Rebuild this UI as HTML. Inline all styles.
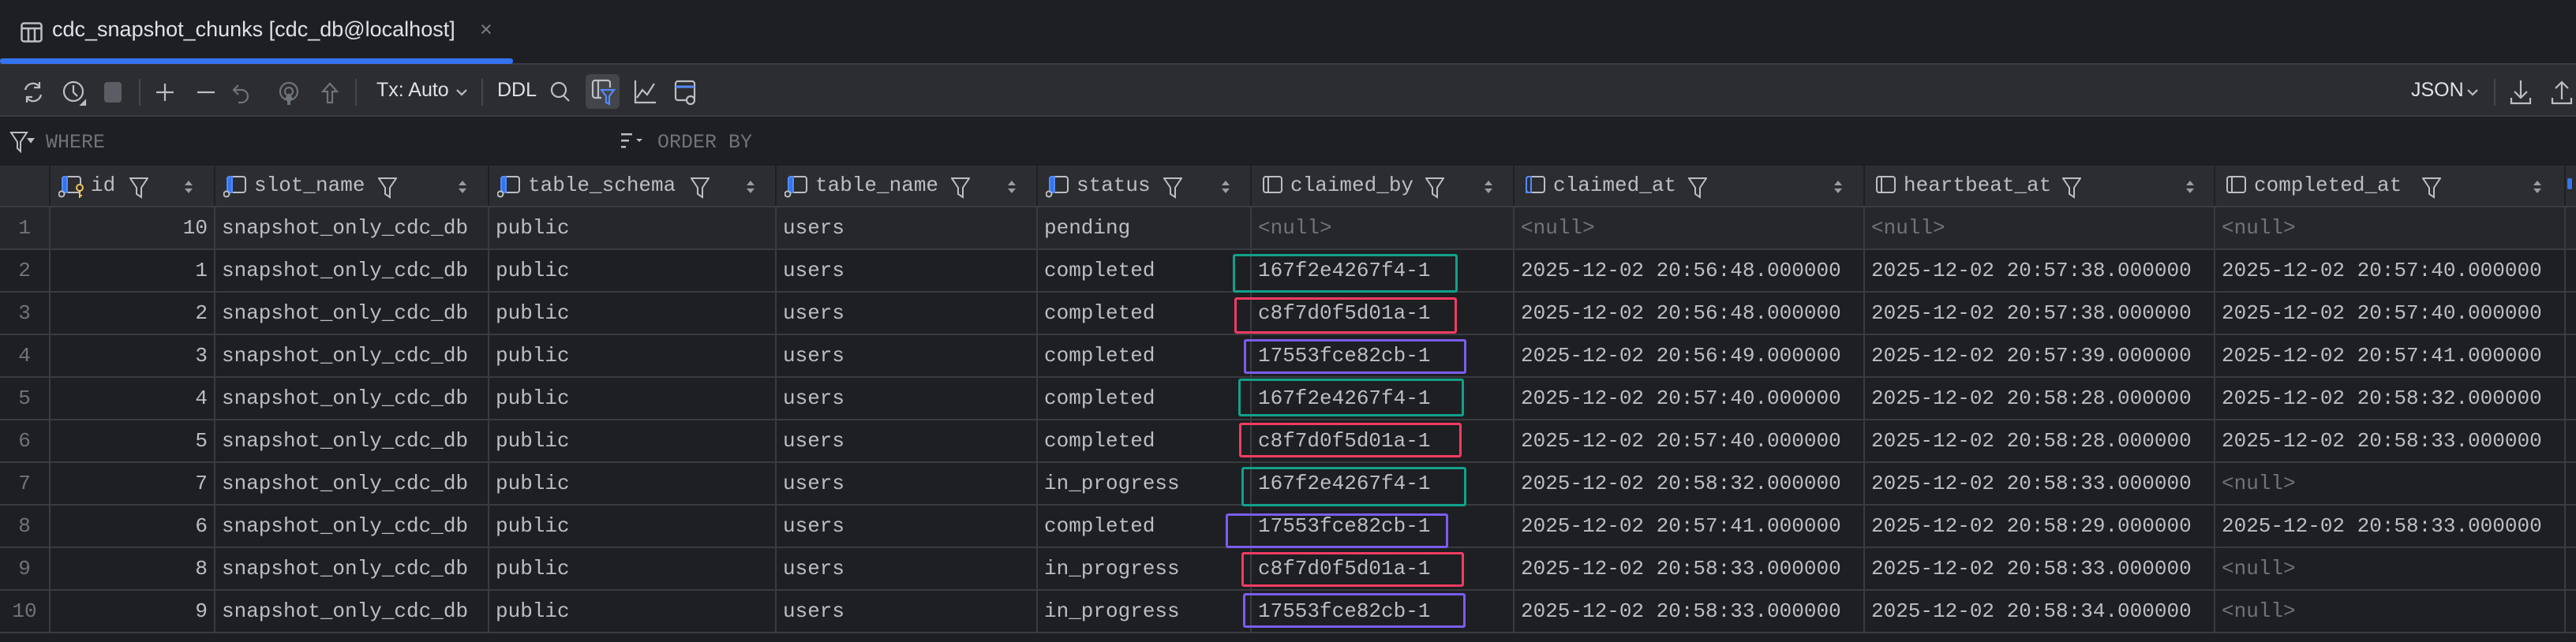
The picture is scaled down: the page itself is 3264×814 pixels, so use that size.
<!DOCTYPE html>
<html><head><meta charset="utf-8"><style>
*{margin:0;padding:0;box-sizing:border-box}
body{width:3264px;height:814px;background:#1e1f22;overflow:hidden;position:relative;font-family:"Liberation Sans",sans-serif;color:#bcbec4}
.a{position:absolute}
.mono{font-family:"Liberation Mono","DejaVu Sans Mono",monospace}
.row{position:absolute;left:0;width:3264px;height:54px;display:flex;border-bottom:2px solid #393b40}
.row>div{height:100%;border-right:2px solid #393b40;font-family:"Liberation Mono",monospace;font-size:26px;line-height:52px;padding-left:8px;white-space:nowrap;overflow:hidden;color:#bcbec4}
.row>div:nth-child(1){width:64px;color:#6f737a;text-align:center;padding-left:0}
.row>div:nth-child(2){width:209px;text-align:right;padding-right:8px}
.row>div:nth-child(3){width:347px}
.row>div:nth-child(4){width:364px}
.row>div:nth-child(5){width:331px}
.row>div:nth-child(6){width:271px}
.row>div:nth-child(7){width:333px}
.row>div:nth-child(8){width:444px}
.row>div:nth-child(9){width:444px}
.row>div:nth-child(10){width:444px}
.row>div:nth-child(11){width:13px;border-right:none}
.n{color:#6f737a!important}
.hdr{position:absolute;top:210px;left:0;width:3264px;height:53px;background:#2b2d30;display:flex;border-bottom:2px solid #393b40}
.hdr>div{height:100%;border-right:2px solid #1e1f22;position:relative;font-family:"Liberation Mono",monospace;font-size:26px;line-height:50px;color:#bcbec4;white-space:nowrap;overflow:hidden}
.hdr svg{position:absolute}
.box{position:absolute;border:3px solid;border-radius:3px}
</style></head><body>
<!-- tab -->
<svg class="a" style="left:26px;top:28px" width="28" height="26" viewBox="0 0 28 26"><rect x="1.5" y="1.5" width="25" height="23" rx="3" fill="none" stroke="#bcbec4" stroke-width="2.5"/><line x1="1.5" y1="8" x2="26.5" y2="8" stroke="#bcbec4" stroke-width="2.5"/><line x1="10" y1="8" x2="10" y2="24" stroke="#bcbec4" stroke-width="2.5"/><line x1="18" y1="8" x2="18" y2="24" stroke="#bcbec4" stroke-width="2.5"/></svg>
<div class="a" style="left:66px;top:22px;font-size:27px;color:#dfe1e5">cdc_snapshot_chunks [cdc_db@localhost]</div>
<div class="a" style="left:608px;top:22px;font-size:27px;color:#7a7e85">×</div>
<div class="a" style="left:0;top:80px;width:3264px;height:2px;background:#393b40"></div>
<div class="a" style="left:0;top:74px;width:650px;height:7px;background:#3574f0;border-radius:3px"></div>
<!-- toolbar -->
<div class="a" style="left:0;top:82px;width:3264px;height:66px;background:#2b2d30;border-bottom:2px solid #393b40"></div>
<svg class="a" style="left:24px;top:100px" width="900" height="34" viewBox="0 0 900 34" fill="none" stroke="#bcbec4" stroke-width="2.2">
<path d="M8 14 A10 10 0 0 1 26 10 M28 20 A10 10 0 0 1 10 24 M26 4 v7 h-7 M10 30 v-7 h7"/>
<circle cx="69" cy="16" r="12"/><path d="M69 8 v9 l5 5"/><path d="M84 28 l-5 5 h5z" fill="#bcbec4"/>
<rect x="108" y="4" width="22" height="26" rx="4" fill="#5a5d63" stroke="none"/>
<line x1="153" y1="0" x2="153" y2="34" stroke="#43454a"/>
<path d="M185 6 v22 M174 17 h22"/>
<path d="M226 17 h22"/>
<path d="M278 8 l-6 6 6 6 M272 14 h10 a8 8 0 0 1 0 16 h-4" stroke="#6f737a"/>
<circle cx="342" cy="16" r="11" stroke="#6f737a"/><circle cx="342" cy="16" r="5" stroke="#6f737a"/><path d="M342 18 l-6 8 h4 v7 h4 v-7 h4z" fill="#6f737a" stroke="none"/>
<path d="M394 6 l-9 10 h6 v14 h6 v-14 h6z" stroke="#6f737a"/>
<line x1="427" y1="0" x2="427" y2="34" stroke="#43454a"/>
<path d="M555 14 l6 6 6 -6"/>
<line x1="587" y1="0" x2="587" y2="34" stroke="#43454a"/>
<circle cx="684" cy="14" r="9"/><path d="M690 21 l7 7"/>
</svg>
<div class="a" style="left:477px;top:100px;font-size:25px;color:#dfe1e5">Tx: Auto</div>
<div class="a" style="left:630px;top:100px;font-size:25px;color:#dfe1e5">DDL</div>
<div class="a" style="left:742px;top:94px;width:43px;height:44px;background:#43454a;border-radius:6px"></div>
<svg class="a" style="left:748px;top:100px" width="32" height="34" viewBox="0 0 32 34" fill="none" stroke-width="2.2"><path d="M14 24 H6 a3 3 0 0 1 -3 -3 V5 a3 3 0 0 1 3 -3 h16 a3 3 0 0 1 3 3 v6" stroke="#bcbec4"/><path d="M10 2 v22" stroke="#bcbec4"/><path d="M14 14 h16 l-6 8 v10 l-4 -2 v-8z" stroke="#548af7"/></svg>
<svg class="a" style="left:802px;top:100px" width="80" height="34" viewBox="0 0 80 34" fill="none" stroke="#bcbec4" stroke-width="2.2"><path d="M3 2 v28 h26 M5 24 l7 -10 6 6 9 -14"/><rect x="54" y="3" width="24" height="24" rx="3"/><path d="M54 10 h24" stroke="#548af7" stroke-width="3"/><circle cx="73" cy="27" r="5" fill="#2b2d30"/></svg>
<div class="a" style="left:3055px;top:100px;font-size:25px;color:#dfe1e5">JSON</div>
<svg class="a" style="left:3124px;top:100px" width="140" height="34" viewBox="0 0 140 34" fill="none" stroke="#bcbec4" stroke-width="2.2"><path d="M3 14 l6 6 6 -6"/><line x1="37" y1="0" x2="37" y2="34" stroke="#43454a"/><path d="M70 2 v22 M62 16 l8 8 8 -8 M58 24 v7 h24 v-7"/><path d="M122 26 v-22 M114 12 l8 -8 8 8 M110 24 v7 h24 v-7"/></svg>
<!-- filter row -->
<svg class="a" style="left:12px;top:166px" width="32" height="28" viewBox="0 0 32 28" fill="none" stroke="#bcbec4" stroke-width="2"><path d="M2 2 h20 l-8 12 v12 l-4 -4 v-8z"/><path d="M24 10 h6 l-3 4z" fill="#bcbec4"/></svg>
<div class="a mono" style="left:58px;top:166px;font-size:25px;color:#6f737a">WHERE</div>
<svg class="a" style="left:786px;top:166px" width="32" height="28" viewBox="0 0 32 28" fill="#bcbec4"><rect x="1" y="3" width="14" height="2.5"/><rect x="1" y="11" width="10" height="2.5"/><rect x="1" y="19" width="6" height="2.5"/><path d="M20 10 h8 l-4 4z"/></svg>
<div class="a mono" style="left:833px;top:166px;font-size:25px;color:#6f737a">ORDER BY</div>
<!-- header -->
<div class="hdr">
<div style="width:64px"></div>
<div style="width:209px"><svg style="left:10px;top:12px" width="34" height="30" viewBox="0 0 34 30" fill="none" stroke-width="2"><rect x="5" y="2" width="23" height="20" rx="3" stroke="#bcbec4"/><path d="M8 2 h3 v20 h-6 v-17 a3 3 0 0 1 3 -3z" fill="#3574f0" stroke="#548af7"/><circle cx="4" cy="24" r="3.5" stroke="#bcbec4" fill="#2b2d30"/><circle cx="27" cy="16" r="4" stroke="#f2c55c" fill="#2b2d30"/><path d="M27 20 v9 M27 26 h3" stroke="#f2c55c"/></svg><span style="position:absolute;left:51px">id</span><svg style="left:100px;top:14px" width="24" height="28" viewBox="0 0 24 28" fill="none" stroke="#bcbec4" stroke-width="2"><path d="M1 2 h22 l-8 12 v12 l-6 -4 v-8z"/></svg><svg style="left:169px;top:18px" width="12" height="18" viewBox="0 0 12 18" fill="#9a9da3"><path d="M6 1 l5 6 h-10z M6 17 l5 -6 h-10z"/></svg></div>
<div style="width:347px"><svg style="left:10px;top:12px" width="34" height="30" viewBox="0 0 34 30" fill="none" stroke-width="2"><rect x="5" y="2" width="23" height="20" rx="3" stroke="#bcbec4"/><path d="M8 2 h3 v20 h-6 v-17 a3 3 0 0 1 3 -3z" fill="#3574f0" stroke="#548af7"/><circle cx="4" cy="24" r="3.5" stroke="#bcbec4" fill="#2b2d30"/></svg><span style="position:absolute;left:49px">slot_name</span><svg style="left:206px;top:14px" width="24" height="28" viewBox="0 0 24 28" fill="none" stroke="#bcbec4" stroke-width="2"><path d="M1 2 h22 l-8 12 v12 l-6 -4 v-8z"/></svg><svg style="left:307px;top:18px" width="12" height="18" viewBox="0 0 12 18" fill="#9a9da3"><path d="M6 1 l5 6 h-10z M6 17 l5 -6 h-10z"/></svg></div>
<div style="width:364px"><svg style="left:10px;top:12px" width="34" height="30" viewBox="0 0 34 30" fill="none" stroke-width="2"><rect x="5" y="2" width="23" height="20" rx="3" stroke="#bcbec4"/><path d="M8 2 h3 v20 h-6 v-17 a3 3 0 0 1 3 -3z" fill="#3574f0" stroke="#548af7"/><circle cx="4" cy="24" r="3.5" stroke="#bcbec4" fill="#2b2d30"/></svg><span style="position:absolute;left:49px">table_schema</span><svg style="left:255px;top:14px" width="24" height="28" viewBox="0 0 24 28" fill="none" stroke="#bcbec4" stroke-width="2"><path d="M1 2 h22 l-8 12 v12 l-6 -4 v-8z"/></svg><svg style="left:325px;top:18px" width="12" height="18" viewBox="0 0 12 18" fill="#9a9da3"><path d="M6 1 l5 6 h-10z M6 17 l5 -6 h-10z"/></svg></div>
<div style="width:331px"><svg style="left:10px;top:12px" width="34" height="30" viewBox="0 0 34 30" fill="none" stroke-width="2"><rect x="5" y="2" width="23" height="20" rx="3" stroke="#bcbec4"/><path d="M8 2 h3 v20 h-6 v-17 a3 3 0 0 1 3 -3z" fill="#3574f0" stroke="#548af7"/><circle cx="4" cy="24" r="3.5" stroke="#bcbec4" fill="#2b2d30"/></svg><span style="position:absolute;left:49px">table_name</span><svg style="left:221px;top:14px" width="24" height="28" viewBox="0 0 24 28" fill="none" stroke="#bcbec4" stroke-width="2"><path d="M1 2 h22 l-8 12 v12 l-6 -4 v-8z"/></svg><svg style="left:292px;top:18px" width="12" height="18" viewBox="0 0 12 18" fill="#9a9da3"><path d="M6 1 l5 6 h-10z M6 17 l5 -6 h-10z"/></svg></div>
<div style="width:271px"><svg style="left:10px;top:12px" width="34" height="30" viewBox="0 0 34 30" fill="none" stroke-width="2"><rect x="5" y="2" width="23" height="20" rx="3" stroke="#bcbec4"/><path d="M8 2 h3 v20 h-6 v-17 a3 3 0 0 1 3 -3z" fill="#3574f0" stroke="#548af7"/><circle cx="4" cy="24" r="3.5" stroke="#bcbec4" fill="#2b2d30"/></svg><span style="position:absolute;left:49px">status</span><svg style="left:159px;top:14px" width="24" height="28" viewBox="0 0 24 28" fill="none" stroke="#bcbec4" stroke-width="2"><path d="M1 2 h22 l-8 12 v12 l-6 -4 v-8z"/></svg><svg style="left:232px;top:18px" width="12" height="18" viewBox="0 0 12 18" fill="#9a9da3"><path d="M6 1 l5 6 h-10z M6 17 l5 -6 h-10z"/></svg></div>
<div style="width:333px"><svg style="left:10px;top:12px" width="34" height="30" viewBox="0 0 34 30" fill="none" stroke-width="2"><rect x="5" y="2" width="23" height="20" rx="3" stroke="#bcbec4"/><path d="M11 2 v20" stroke="#bcbec4"/></svg><span style="position:absolute;left:49px">claimed_by</span><svg style="left:220px;top:14px" width="24" height="28" viewBox="0 0 24 28" fill="none" stroke="#bcbec4" stroke-width="2"><path d="M1 2 h22 l-8 12 v12 l-6 -4 v-8z"/></svg><svg style="left:294px;top:18px" width="12" height="18" viewBox="0 0 12 18" fill="#9a9da3"><path d="M6 1 l5 6 h-10z M6 17 l5 -6 h-10z"/></svg></div>
<div style="width:444px"><svg style="left:10px;top:12px" width="34" height="30" viewBox="0 0 34 30" fill="none" stroke-width="2"><rect x="5" y="2" width="23" height="20" rx="3" stroke="#bcbec4"/><path d="M8 2 h3 v20 h-6 v-17 a3 3 0 0 1 3 -3z" fill="none" stroke="#548af7"/></svg><span style="position:absolute;left:49px">claimed_at</span><svg style="left:220px;top:14px" width="24" height="28" viewBox="0 0 24 28" fill="none" stroke="#bcbec4" stroke-width="2"><path d="M1 2 h22 l-8 12 v12 l-6 -4 v-8z"/></svg><svg style="left:404px;top:18px" width="12" height="18" viewBox="0 0 12 18" fill="#9a9da3"><path d="M6 1 l5 6 h-10z M6 17 l5 -6 h-10z"/></svg></div>
<div style="width:444px"><svg style="left:10px;top:12px" width="34" height="30" viewBox="0 0 34 30" fill="none" stroke-width="2"><rect x="5" y="2" width="23" height="20" rx="3" stroke="#bcbec4"/><path d="M11 2 v20" stroke="#bcbec4"/></svg><span style="position:absolute;left:49px">heartbeat_at</span><svg style="left:250px;top:14px" width="24" height="28" viewBox="0 0 24 28" fill="none" stroke="#bcbec4" stroke-width="2"><path d="M1 2 h22 l-8 12 v12 l-6 -4 v-8z"/></svg><svg style="left:406px;top:18px" width="12" height="18" viewBox="0 0 12 18" fill="#9a9da3"><path d="M6 1 l5 6 h-10z M6 17 l5 -6 h-10z"/></svg></div>
<div style="width:444px"><svg style="left:10px;top:12px" width="34" height="30" viewBox="0 0 34 30" fill="none" stroke-width="2"><rect x="5" y="2" width="23" height="20" rx="3" stroke="#bcbec4"/><path d="M11 2 v20" stroke="#bcbec4"/></svg><span style="position:absolute;left:49px">completed_at</span><svg style="left:262px;top:14px" width="24" height="28" viewBox="0 0 24 28" fill="none" stroke="#bcbec4" stroke-width="2"><path d="M1 2 h22 l-8 12 v12 l-6 -4 v-8z"/></svg><svg style="left:402px;top:18px" width="12" height="18" viewBox="0 0 12 18" fill="#9a9da3"><path d="M6 1 l5 6 h-10z M6 17 l5 -6 h-10z"/></svg></div>
<div style="width:13px;border-right:none"><div style="position:absolute;left:2px;top:16px;width:6px;height:14px;background:#3574f0;border-radius:2px"></div></div>
</div>
<!-- rows -->
<div class="row" style="top:263px;background:#25272b"><div>1</div><div>10</div><div>snapshot_only_cdc_db</div><div>public</div><div>users</div><div>pending</div><div class="n">&lt;null&gt;</div><div class="n">&lt;null&gt;</div><div class="n">&lt;null&gt;</div><div class="n">&lt;null&gt;</div><div></div></div>
<div class="row" style="top:317px"><div>2</div><div>1</div><div>snapshot_only_cdc_db</div><div>public</div><div>users</div><div>completed</div><div>167f2e4267f4-1</div><div>2025-12-02 20:56:48.000000</div><div>2025-12-02 20:57:38.000000</div><div>2025-12-02 20:57:40.000000</div><div></div></div>
<div class="row" style="top:371px"><div>3</div><div>2</div><div>snapshot_only_cdc_db</div><div>public</div><div>users</div><div>completed</div><div>c8f7d0f5d01a-1</div><div>2025-12-02 20:56:48.000000</div><div>2025-12-02 20:57:38.000000</div><div>2025-12-02 20:57:40.000000</div><div></div></div>
<div class="row" style="top:425px"><div>4</div><div>3</div><div>snapshot_only_cdc_db</div><div>public</div><div>users</div><div>completed</div><div>17553fce82cb-1</div><div>2025-12-02 20:56:49.000000</div><div>2025-12-02 20:57:39.000000</div><div>2025-12-02 20:57:41.000000</div><div></div></div>
<div class="row" style="top:479px"><div>5</div><div>4</div><div>snapshot_only_cdc_db</div><div>public</div><div>users</div><div>completed</div><div>167f2e4267f4-1</div><div>2025-12-02 20:57:40.000000</div><div>2025-12-02 20:58:28.000000</div><div>2025-12-02 20:58:32.000000</div><div></div></div>
<div class="row" style="top:533px"><div>6</div><div>5</div><div>snapshot_only_cdc_db</div><div>public</div><div>users</div><div>completed</div><div>c8f7d0f5d01a-1</div><div>2025-12-02 20:57:40.000000</div><div>2025-12-02 20:58:28.000000</div><div>2025-12-02 20:58:33.000000</div><div></div></div>
<div class="row" style="top:587px"><div>7</div><div>7</div><div>snapshot_only_cdc_db</div><div>public</div><div>users</div><div>in_progress</div><div>167f2e4267f4-1</div><div>2025-12-02 20:58:32.000000</div><div>2025-12-02 20:58:33.000000</div><div class="n">&lt;null&gt;</div><div></div></div>
<div class="row" style="top:641px"><div>8</div><div>6</div><div>snapshot_only_cdc_db</div><div>public</div><div>users</div><div>completed</div><div>17553fce82cb-1</div><div>2025-12-02 20:57:41.000000</div><div>2025-12-02 20:58:29.000000</div><div>2025-12-02 20:58:33.000000</div><div></div></div>
<div class="row" style="top:695px"><div>9</div><div>8</div><div>snapshot_only_cdc_db</div><div>public</div><div>users</div><div>in_progress</div><div>c8f7d0f5d01a-1</div><div>2025-12-02 20:58:33.000000</div><div>2025-12-02 20:58:33.000000</div><div class="n">&lt;null&gt;</div><div></div></div>
<div class="row" style="top:749px"><div>10</div><div>9</div><div>snapshot_only_cdc_db</div><div>public</div><div>users</div><div>in_progress</div><div>17553fce82cb-1</div><div>2025-12-02 20:58:33.000000</div><div>2025-12-02 20:58:34.000000</div><div class="n">&lt;null&gt;</div><div></div></div>
<!-- highlight boxes -->
<div class="box" style="left:1562px;top:322px;width:285px;height:49px;border-color:#12a08a"></div>
<div class="box" style="left:1564px;top:377px;width:282px;height:46px;border-color:#f23b63"></div>
<div class="box" style="left:1576px;top:430px;width:282px;height:44px;border-color:#7b5cf0"></div>
<div class="box" style="left:1569px;top:480px;width:286px;height:48px;border-color:#12a08a"></div>
<div class="box" style="left:1570px;top:536px;width:282px;height:44px;border-color:#f23b63"></div>
<div class="box" style="left:1573px;top:592px;width:285px;height:50px;border-color:#12a08a"></div>
<div class="box" style="left:1553px;top:651px;width:282px;height:44px;border-color:#7b5cf0"></div>
<div class="box" style="left:1573px;top:700px;width:282px;height:44px;border-color:#f23b63"></div>
<div class="box" style="left:1575px;top:752px;width:282px;height:44px;border-color:#7b5cf0"></div>
</body></html>
